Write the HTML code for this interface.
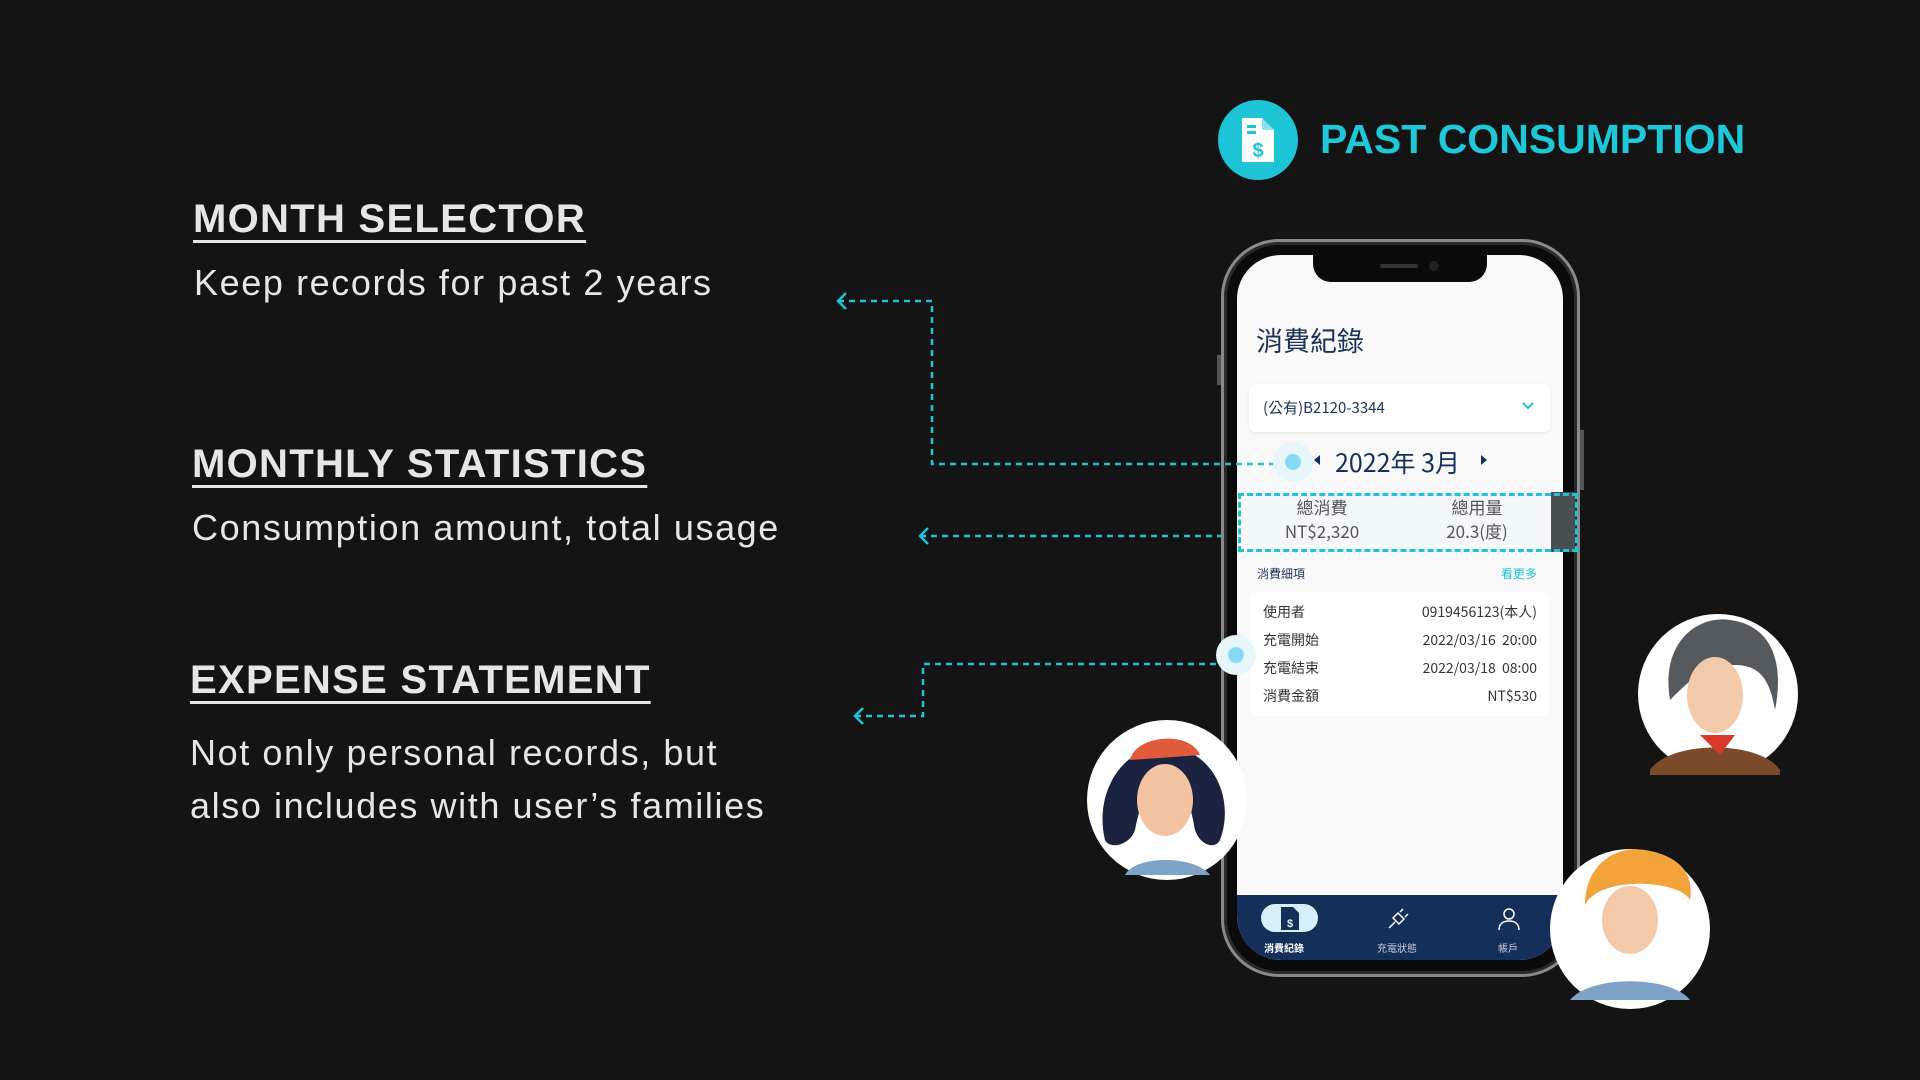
<!DOCTYPE html>
<html><head><meta charset="utf-8"><style>
*{margin:0;padding:0;box-sizing:border-box}
body{width:1920px;height:1080px;background:#141414;position:relative;overflow:hidden;font-family:"Liberation Sans","Noto Sans CJK TC",sans-serif}
.a{position:absolute}
.h{color:#e6e6e6;font-weight:bold;font-size:40px;text-decoration:underline;text-decoration-thickness:3px;text-underline-offset:8px;white-space:nowrap;letter-spacing:1.3px}
.p{color:#e6e6e6;font-size:36px;white-space:nowrap;letter-spacing:1.6px;line-height:53px}
.cjk{font-family:"Noto Sans CJK TC","Liberation Sans",sans-serif}
.row{position:absolute;left:1263px;width:274px;display:flex;justify-content:space-between;font-size:14px;color:#333}
</style></head><body>
<div class="a" style="left:1218px;top:100px;width:80px;height:80px;border-radius:50%;background:#1ec3d6"></div>
<svg class="a" style="left:1238px;top:116px" width="40" height="48" viewBox="0 0 40 48"><path d="M4 2h20l12 12v32H4z" fill="#fff"/><path d="M24 2v12h12" fill="#1ec3d6" opacity=".5"/><rect x="9" y="9" width="9" height="3" fill="#1ec3d6"/><rect x="9" y="15" width="9" height="3" fill="#1ec3d6"/><text x="20" y="41" font-size="20" font-weight="bold" fill="#1ec3d6" text-anchor="middle" font-family="Liberation Sans">$</text></svg>
<div class="a" style="left:1320px;top:116px;color:#1ec8d8;font-weight:bold;font-size:41px;white-space:nowrap">PAST CONSUMPTION</div>

<div class="a h" style="left:193px;top:197px">MONTH SELECTOR</div>
<div class="a p" style="left:194px;top:256px">Keep records for past 2 years</div>
<div class="a h" style="left:192px;top:442px">MONTHLY STATISTICS</div>
<div class="a p" style="left:192px;top:501px">Consumption amount, total usage</div>
<div class="a h" style="left:190px;top:658px">EXPENSE STATEMENT</div>
<div class="a p" style="left:190px;top:726px">Not only personal records, but<br>also includes with user’s families</div>

<div class="a" style="left:1221px;top:239px;width:359px;height:738px;border-radius:58px;background:#0b0b0b;border:3px solid #8a8a8a;box-shadow:inset 0 0 0 3px #2a2a2a"></div>
<div class="a" style="left:1217px;top:355px;width:4px;height:30px;background:#555"></div>
<div class="a" style="left:1580px;top:430px;width:4px;height:60px;background:#555"></div>
<div class="a" style="left:1237px;top:255px;width:326px;height:705px;border-radius:44px;background:#f9f9f9;overflow:hidden">
 <div class="a" style="left:76px;top:0;width:174px;height:27px;background:#0b0b0b;border-radius:0 0 18px 18px"></div>
 <div class="a" style="left:143px;top:9px;width:38px;height:4px;background:#333;border-radius:2px"></div>
 <div class="a" style="left:192px;top:6px;width:10px;height:10px;background:#222;border-radius:50%"></div>
 <div class="a" style="left:0;top:640px;width:326px;height:65px;background:#142f5a"></div>
</div>
<div class="a cjk" style="left:1256px;top:320px;font-size:27px;color:#1a3358">消費紀錄</div>
<div class="a" style="left:1249px;top:384px;width:301px;height:48px;background:#fff;border-radius:6px;box-shadow:0 1px 3px rgba(0,0,0,.08)"></div>
<div class="a cjk" style="left:1263px;top:397px;font-size:15px;color:#1a3358">(公有)B2120-3344</div>
<svg class="a" style="left:1522px;top:402px" width="12" height="8"><path d="M1 1l5 5 5-5" stroke="#1ec3d6" stroke-width="2" fill="none"/></svg>
<div class="a" style="left:1314px;top:455px;border:5px solid transparent;border-right:6px solid #142f5a;border-left:0"></div>
<div class="a cjk" style="left:1335px;top:444px;font-size:25px;color:#142f5a">2022年 3月</div>
<div class="a" style="left:1481px;top:455px;border:5px solid transparent;border-left:6px solid #142f5a;border-right:0"></div>
<div class="a" style="left:1249px;top:492px;width:300px;height:60px;background:#f3f8fb"></div>
<div class="a" style="left:1551px;top:492px;width:24px;height:60px;background:#4a5051"></div>
<div class="a cjk" style="left:1242px;top:495px;width:160px;text-align:center;font-size:17px;color:#555;line-height:24px">總消費<br>NT$2,320</div>
<div class="a cjk" style="left:1397px;top:495px;width:160px;text-align:center;font-size:17px;color:#555;line-height:24px">總用量<br>20.3(度)</div>
<div class="a" style="left:1238px;top:493px;width:340px;height:59px;border:3px dashed #1ec3d6"></div>
<div class="a cjk" style="left:1257px;top:565px;font-size:12px;color:#1a3358">消費細項</div>
<div class="a cjk" style="left:1501px;top:565px;font-size:12px;color:#1ec3d6">看更多</div>
<div class="a" style="left:1250px;top:592px;width:299px;height:124px;background:#fff;border-radius:6px"></div>
<div class="row cjk" style="top:602px"><span>使用者</span><span>0919456123(本人)</span></div>
<div class="row cjk" style="top:630px"><span>充電開始</span><span>2022/03/16&nbsp; 20:00</span></div>
<div class="row cjk" style="top:658px"><span>充電結束</span><span>2022/03/18&nbsp; 08:00</span></div>
<div class="row cjk" style="top:686px"><span>消費金額</span><span>NT$530</span></div>
<div class="a" style="left:1261px;top:904px;width:57px;height:28px;background:#d6f0fb;border-radius:14px"></div>
<svg class="a" style="left:1280px;top:906px" width="20" height="25"><path d="M1 1h12l6 6v17H1z" fill="#142f5a"/><text x="10" y="21" font-size="11" font-weight="bold" fill="#d6f0fb" text-anchor="middle" font-family="Liberation Sans">$</text></svg>
<svg class="a" style="left:1387px;top:906px" width="24" height="24"><path d="M2 22l6-6M6 12l6 6 5-5-6-6zM13 6l3-3M18 11l3-3" stroke="#fff" stroke-width="1.5" fill="none"/></svg>
<svg class="a" style="left:1497px;top:907px" width="24" height="24"><circle cx="12" cy="7" r="5" stroke="#fff" stroke-width="1.5" fill="none"/><path d="M2 23c0-6 4-9 10-9s10 3 10 9" stroke="#fff" stroke-width="1.5" fill="none"/></svg>
<div class="a cjk" style="left:1264px;top:940px;font-size:10px;color:#fff;font-weight:bold">消費紀錄</div>
<div class="a cjk" style="left:1377px;top:940px;font-size:10px;color:#ccd">充電狀態</div>
<div class="a cjk" style="left:1498px;top:940px;font-size:10px;color:#ccd">帳戶</div>

<svg class="a" style="left:0;top:0" width="1920" height="1080">
<g stroke="#1ec3d6" stroke-width="2.5" stroke-dasharray="6 5" fill="none">
<path d="M838 301H932V464H1275"/><path d="M920 536H1221"/><path d="M855 716H923V664H1222"/>
</g>
<g stroke="#1ec3d6" stroke-width="2.5" fill="none"><path d="M846 293l-8 8 8 8"/><path d="M928 528l-8 8 8 8"/><path d="M863 708l-8 8 8 8"/></g>
<circle cx="1293" cy="462" r="20" fill="#e6f6fb"/><circle cx="1293" cy="462" r="8" fill="#86d9f2"/>
<circle cx="1236" cy="655" r="20" fill="#e6f6fb"/><circle cx="1236" cy="655" r="8" fill="#86d9f2"/>
<circle cx="1167" cy="800" r="80" fill="#fff"/>
<path d="M1105 840c-10-40 10-90 60-95 50 5 70 55 55 95-5 10-20 5-25-10-5-30-10-40-30-45-20 5-25 20-30 45-5 15-25 20-30 10z" fill="#1b2340"/>
<ellipse cx="1165" cy="800" rx="28" ry="36" fill="#f3c2a0"/>
<path d="M1130 760c5-25 60-30 70-5z" fill="#e25a3c"/>
<path d="M1125 875c10-20 70-20 85 0z" fill="#7fa2c7"/>
<circle cx="1718" cy="694" r="80" fill="#fff"/>
<path d="M1670 700c-10-60 30-85 60-80 40 5 55 40 45 90-5-30-15-45-40-45-30 0-45 15-65 35z" fill="#555a5f"/>
<ellipse cx="1715" cy="695" rx="28" ry="38" fill="#f2c9a9"/>
<path d="M1650 770c20-30 110-30 130 0v5h-130z" fill="#7a4a2a"/>
<path d="M1700 735l20 20 15-20z" fill="#d9382b"/>
<circle cx="1630" cy="929" r="80" fill="#fff"/>
<path d="M1585 905c0-40 30-60 60-55 30 5 50 20 45 50-10-20-90-25-105 5z" fill="#f2a33a"/>
<ellipse cx="1630" cy="920" rx="28" ry="34" fill="#f2c9a9"/>
<path d="M1570 1000c20-25 100-25 120 0z" fill="#7fa2c7"/>
</svg>
</body></html>
